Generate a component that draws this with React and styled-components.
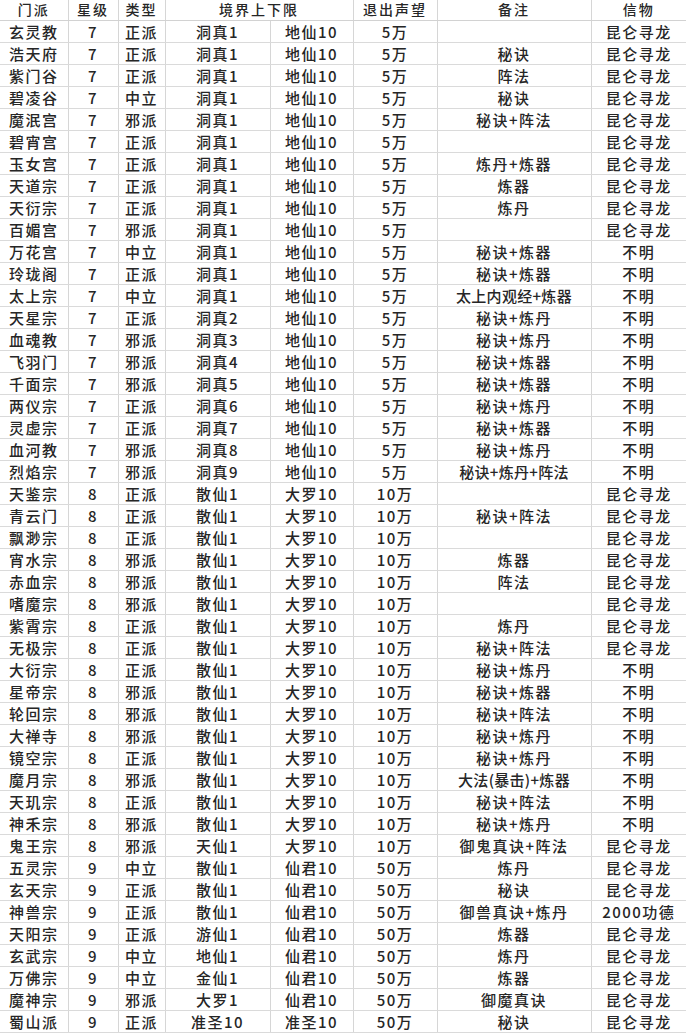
import React from 'react';
import styled, { createGlobalStyle } from 'styled-components';

const GlobalStyle = createGlobalStyle`
  html, body {
    margin: 0;
    padding: 0;
    background: #ffffff;
  }
  body {
    font-family: "Noto Sans CJK SC", "Liberation Sans", sans-serif;
  }
`;

const columns = [68, 50, 47, 105, 83, 84, 154, 95];

const rows = [
  ['玄灵教', '7', '正派', '洞真1', '地仙10', '5万', '', '昆仑寻龙'],
  ['浩天府', '7', '正派', '洞真1', '地仙10', '5万', '秘诀', '昆仑寻龙'],
  ['紫门谷', '7', '正派', '洞真1', '地仙10', '5万', '阵法', '昆仑寻龙'],
  ['碧凌谷', '7', '中立', '洞真1', '地仙10', '5万', '秘诀', '昆仑寻龙'],
  ['魔泯宫', '7', '邪派', '洞真1', '地仙10', '5万', '秘诀+阵法', '昆仑寻龙'],
  ['碧宵宫', '7', '正派', '洞真1', '地仙10', '5万', '', '昆仑寻龙'],
  ['玉女宫', '7', '正派', '洞真1', '地仙10', '5万', '炼丹+炼器', '昆仑寻龙'],
  ['天道宗', '7', '正派', '洞真1', '地仙10', '5万', '炼器', '昆仑寻龙'],
  ['天衍宗', '7', '正派', '洞真1', '地仙10', '5万', '炼丹', '昆仑寻龙'],
  ['百媚宫', '7', '邪派', '洞真1', '地仙10', '5万', '', '昆仑寻龙'],
  ['万花宫', '7', '中立', '洞真1', '地仙10', '5万', '秘诀+炼器', '不明'],
  ['玲珑阁', '7', '正派', '洞真1', '地仙10', '5万', '秘诀+炼器', '不明'],
  ['太上宗', '7', '中立', '洞真1', '地仙10', '5万', '太上内观经+炼器', '不明'],
  ['天星宗', '7', '正派', '洞真2', '地仙10', '5万', '秘诀+炼丹', '不明'],
  ['血魂教', '7', '邪派', '洞真3', '地仙10', '5万', '秘诀+炼丹', '不明'],
  ['飞羽门', '7', '邪派', '洞真4', '地仙10', '5万', '秘诀+炼器', '不明'],
  ['千面宗', '7', '邪派', '洞真5', '地仙10', '5万', '秘诀+炼器', '不明'],
  ['两仪宗', '7', '正派', '洞真6', '地仙10', '5万', '秘诀+炼丹', '不明'],
  ['灵虚宗', '7', '正派', '洞真7', '地仙10', '5万', '秘诀+炼器', '不明'],
  ['血河教', '7', '邪派', '洞真8', '地仙10', '5万', '秘诀+炼丹', '不明'],
  ['烈焰宗', '7', '邪派', '洞真9', '地仙10', '5万', '秘诀+炼丹+阵法', '不明'],
  ['天鉴宗', '8', '正派', '散仙1', '大罗10', '10万', '', '昆仑寻龙'],
  ['青云门', '8', '正派', '散仙1', '大罗10', '10万', '秘诀+阵法', '昆仑寻龙'],
  ['飘渺宗', '8', '正派', '散仙1', '大罗10', '10万', '', '昆仑寻龙'],
  ['宵水宗', '8', '邪派', '散仙1', '大罗10', '10万', '炼器', '昆仑寻龙'],
  ['赤血宗', '8', '邪派', '散仙1', '大罗10', '10万', '阵法', '昆仑寻龙'],
  ['嗜魔宗', '8', '邪派', '散仙1', '大罗10', '10万', '', '昆仑寻龙'],
  ['紫霄宗', '8', '正派', '散仙1', '大罗10', '10万', '炼丹', '昆仑寻龙'],
  ['无极宗', '8', '正派', '散仙1', '大罗10', '10万', '秘诀+阵法', '昆仑寻龙'],
  ['大衍宗', '8', '正派', '散仙1', '大罗10', '10万', '秘诀+炼丹', '不明'],
  ['星帝宗', '8', '邪派', '散仙1', '大罗10', '10万', '秘诀+炼器', '不明'],
  ['轮回宗', '8', '邪派', '散仙1', '大罗10', '10万', '秘诀+阵法', '不明'],
  ['大禅寺', '8', '邪派', '散仙1', '大罗10', '10万', '秘诀+炼丹', '不明'],
  ['镜空宗', '8', '正派', '散仙1', '大罗10', '10万', '秘诀+炼丹', '不明'],
  ['魔月宗', '8', '邪派', '散仙1', '大罗10', '10万', '大法(暴击)+炼器', '不明'],
  ['天玑宗', '8', '正派', '散仙1', '大罗10', '10万', '秘诀+阵法', '不明'],
  ['神禾宗', '8', '邪派', '散仙1', '大罗10', '10万', '秘诀+炼丹', '不明'],
  ['鬼王宗', '8', '邪派', '天仙1', '大罗10', '10万', '御鬼真诀+阵法', '昆仑寻龙'],
  ['五灵宗', '9', '中立', '散仙1', '仙君10', '50万', '炼丹', '昆仑寻龙'],
  ['玄天宗', '9', '正派', '散仙1', '仙君10', '50万', '秘诀', '昆仑寻龙'],
  ['神兽宗', '9', '正派', '散仙1', '仙君10', '50万', '御兽真诀+炼丹', '2000功德'],
  ['天阳宗', '9', '正派', '游仙1', '仙君10', '50万', '炼器', '昆仑寻龙'],
  ['玄武宗', '9', '中立', '地仙1', '仙君10', '50万', '炼丹', '昆仑寻龙'],
  ['万佛宗', '9', '中立', '金仙1', '仙君10', '50万', '炼器', '昆仑寻龙'],
  ['魔神宗', '9', '邪派', '大罗1', '仙君10', '50万', '御魔真诀', '昆仑寻龙'],
  ['蜀山派', '9', '正派', '准圣10', '准圣10', '50万', '秘诀', '昆仑寻龙'],
];

const Sheet = styled.table`
  width: 686px;
  table-layout: fixed;
  border-collapse: collapse;
  color: #262626;
  font-size: 15px;
  font-weight: 500;
`;

const HeadRow = styled.tr`
  height: 20px;
`;

const BodyRow = styled.tr`
  height: 22px;
`;

const HeadCell = styled.th`
  font-weight: 500;
  font-size: 14px;
  line-height: 19px;
  padding: 0;
  text-align: center;
  white-space: nowrap;
  letter-spacing: 2px;
  border-right: 1px solid #d6d6d6;
  border-bottom: 1px solid #d2d2d2;
  &:last-child {
    border-right: none;
  }
`;

const Cell = styled.td`
  line-height: 21px;
  padding: 0;
  text-align: center;
  white-space: nowrap;
  letter-spacing: ${({ $tight }) => ($tight ? '0.3px' : '1.5px')};
  border-right: 1px solid #d6d6d6;
  border-bottom: 1px solid #dadada;
  &:last-child {
    border-right: none;
  }
`;

const App = () => (
  <>
    <GlobalStyle />
    <Sheet>
      <colgroup>
        {columns.map((w, i) => (
          <col key={i} style={{ width: w }} />
        ))}
      </colgroup>
      <thead>
        <HeadRow>
          <HeadCell>门派</HeadCell>
          <HeadCell>星级</HeadCell>
          <HeadCell>类型</HeadCell>
          <HeadCell colSpan={2}>境界上下限</HeadCell>
          <HeadCell>退出声望</HeadCell>
          <HeadCell>备注</HeadCell>
          <HeadCell>信物</HeadCell>
        </HeadRow>
      </thead>
      <tbody>
        {rows.map((r) => (
          <BodyRow key={r[0]}>
            {r.map((v, i) => (
              <Cell key={i} $tight={i === 6 && v.length > 7}>
                {v}
              </Cell>
            ))}
          </BodyRow>
        ))}
      </tbody>
    </Sheet>
  </>
);

export default App;
